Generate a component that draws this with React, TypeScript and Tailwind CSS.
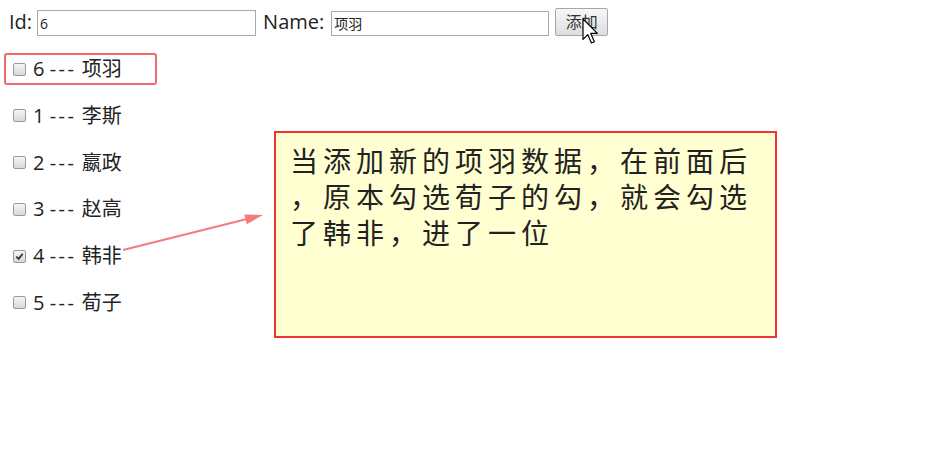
import React from 'react';

const sans = { fontFamily: '"Open Sans", "Noto Sans CJK SC", sans-serif' };

const people = [
  { id: 6, name: '项羽', highlight: true, checked: false },
  { id: 1, name: '李斯', highlight: false, checked: false },
  { id: 2, name: '嬴政', highlight: false, checked: false },
  { id: 3, name: '赵高', highlight: false, checked: false },
  { id: 4, name: '韩非', highlight: false, checked: true },
  { id: 5, name: '荀子', highlight: false, checked: false },
];

// the note wraps without kinsoku in the original, so the lines are fixed here
const noteLines = ['当添加新的项羽数据，在前面后', '，原本勾选荀子的勾，就会勾选', '了韩非，进了一位'];

function Box({ checked }: { checked: boolean }) {
  return (
    <span className="flex h-[13px] w-[13px] shrink-0 items-center justify-center rounded-[2px] border border-[#9a9a9a] bg-gradient-to-b from-[#f6f6f6] to-[#d8d8d8]">
      {checked && (
        <svg viewBox="0 0 10 10" className="h-[9px] w-[9px]">
          <path d="M1.5 5.2 L4 7.6 L8.6 2" fill="none" stroke="#333" strokeWidth="2" />
        </svg>
      )}
    </span>
  );
}

export default function App() {
  return (
    <div className="relative h-[453px] w-[928px] overflow-hidden bg-white text-[#222]" style={sans}>
      <div className="flex h-[28px] items-center pl-[9px] mt-2 text-[20px]">
        <span className="leading-none">Id:</span>
        <div className="ml-[5px] flex h-[26px] w-[219px] items-center border border-[#a9a9a9] bg-white px-[2px] text-[14px] mt-[2px]">
          6
        </div>
        <span className="ml-[7px] leading-none">Name:</span>
        <div className="ml-[7px] flex h-[25px] w-[218px] items-center border border-[#a9a9a9] bg-white px-[2px] text-[14px] mt-[2px]">
          项羽
        </div>
        <button className="ml-[6px] h-[28px] w-[53px] rounded-[2px] border border-[#a6a6a6] bg-gradient-to-b from-[#f7f7f7] to-[#dedede] text-[16px] text-[#333]">
          添加
        </button>
      </div>

      <div className="mt-[17px] flex">
        <div className="flex w-[274px] shrink-0 flex-col gap-[14.8px] pl-1">
          {people.map((p) => (
            <div
              key={p.id}
              className={`flex h-8 w-[153px] items-center gap-[7px] rounded-[3px] border-2 pl-[7px] text-[20px] ${
                p.highlight ? 'border-[#f26a6a]' : 'border-transparent'
              }`}
            >
              <Box checked={p.checked} />
              <span className="whitespace-nowrap leading-none">
                {p.id} <span className="tracking-[2.5px]">---</span> {p.name}
              </span>
            </div>
          ))}
        </div>

        <div
          className="mt-[78px] h-[207px] w-[503px] border-2 border-[#f03434] bg-[#ffffd2] pl-[14px] pt-[9px] text-[28px] leading-[36px] tracking-[5px] text-[#222]"
          style={{ fontFamily: '"Noto Sans CJK SC", sans-serif' }}
        >
          {noteLines.map((line) => (
            <div key={line} className="whitespace-nowrap">
              {line}
            </div>
          ))}
        </div>
      </div>

      <svg className="pointer-events-none absolute inset-0" width="928" height="453">
        <line x1="123" y1="250" x2="247" y2="219" stroke="#f47c7c" strokeWidth="2" />
        <polygon points="263,215 246.8,224.2 244.3,214.5" fill="#f47c7c" />
        <g transform="translate(583 19) scale(1.2)">
          <polygon
            points="0,0 0,17 4,13 7,20 9.5,19 6.5,12 12,12"
            fill="#fff"
            stroke="#000"
            strokeWidth="1"
            strokeLinejoin="round"
          />
        </g>
      </svg>
    </div>
  );
}
